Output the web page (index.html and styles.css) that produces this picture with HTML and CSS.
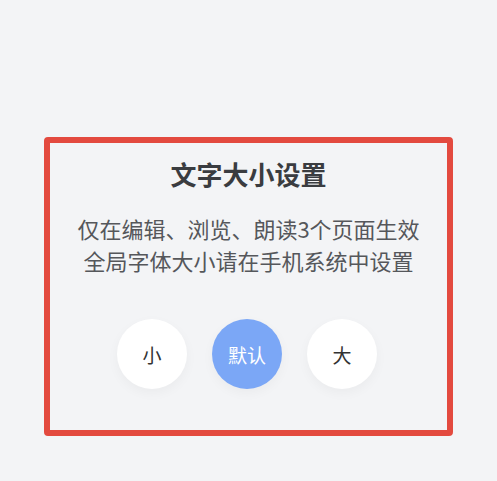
FILE: index.html
```html
<!DOCTYPE html>
<html lang="zh-CN">
<head>
<meta charset="utf-8">
<link rel="stylesheet" href="styles.css">
</head>
<body>
<div class="panel">
  <div class="title">文字大小设置</div>
  <div class="desc">
    <div class="line">仅在编辑、浏览、朗读3个页面生效</div>
    <div class="line">全局字体大小请在手机系统中设置</div>
  </div>
  <div class="options">
    <div class="opt">小</div>
    <div class="opt active">默认</div>
    <div class="opt">大</div>
  </div>
</div>
</body>
</html>
```
FILE: styles.css
```css
html, body {
  margin: 0;
  padding: 0;
}
body {
  background: #f3f4f6;
  width: 497px;
  height: 481px;
  overflow: hidden;
  font-family: "Noto Sans CJK SC", "Noto Sans", sans-serif;
}
.panel {
  box-sizing: border-box;
  margin: 137px 0 0 44px;
  width: 409px;
  height: 299px;
  border: 6px solid #e34a3f;
  border-radius: 4px;
  display: flex;
  flex-direction: column;
  align-items: center;
  padding-top: 16px;
}
.title {
  font-size: 26px;
  line-height: 30px;
  font-weight: 700;
  color: #3a3c40;
}
.desc {
  margin-top: 23px;
  display: flex;
  flex-direction: column;
  align-items: center;
}
.line {
  font-size: 22px;
  line-height: 32px;
  font-weight: 400;
  color: #55575b;
}
.options {
  margin-top: 43px;
  display: flex;
  gap: 25px;
  margin-left: -3px;
}
.opt {
  width: 70px;
  height: 70px;
  border-radius: 50%;
  background: #ffffff;
  box-shadow: 0 4px 12px rgba(0, 0, 0, 0.04);
  display: flex;
  align-items: center;
  justify-content: center;
  font-size: 19px;
  color: #333333;
}
.opt.active {
  background: #7ba7f6;
  color: #ffffff;
}
```
